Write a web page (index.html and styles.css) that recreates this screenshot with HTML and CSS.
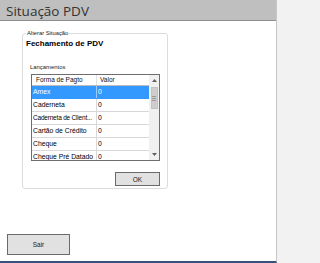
FILE: index.html
```html
<!DOCTYPE html>
<html lang="pt">
<head>
<meta charset="utf-8">
<title>Situação PDV</title>
<link rel="stylesheet" href="styles.css">
</head>
<body>
<div class="window">
  <div class="titlebar"><span class="title">Situação PDV</span></div>
  <div class="content">
    <div class="group">
      <span class="legend">Alterar Situação</span>
      <div class="heading">Fechamento de PDV</div>
      <div class="section-label">Lançamentos</div>
      <div class="grid">
        <div class="table">
          <div class="row head"><div class="cell c1">Forma de Pagto</div><div class="cell c2">Valor</div></div>
          <div class="row selected"><div class="cell c1">Amex</div><div class="cell c2">0</div></div>
          <div class="row"><div class="cell c1">Caderneta</div><div class="cell c2">0</div></div>
          <div class="row"><div class="cell c1 tight">Caderneta de Client...</div><div class="cell c2">0</div></div>
          <div class="row"><div class="cell c1">Cartão de Crédito</div><div class="cell c2">0</div></div>
          <div class="row"><div class="cell c1">Cheque</div><div class="cell c2">0</div></div>
          <div class="row"><div class="cell c1">Cheque Pré Datado</div><div class="cell c2">0</div></div>
        </div>
        <div class="scrollbar">
          <div class="arrow"><svg width="5" height="3" viewBox="0 0 5 3"><path d="M0 3 L2.5 0 L5 3 Z" fill="#606060"/></svg></div>
          <div class="track">
            <div class="thumb"><svg width="4" height="5" viewBox="0 0 4 5"><path d="M0 0.5 H4 M0 2.5 H4 M0 4.5 H4" stroke="#9a9a9a" stroke-width="1"/></svg></div>
          </div>
          <div class="arrow"><svg width="5" height="3" viewBox="0 0 5 3"><path d="M0 0 L2.5 3 L5 0 Z" fill="#606060"/></svg></div>
        </div>
      </div>
      <div class="actions"><button class="btn ok" type="button">OK</button></div>
    </div>
    <button class="btn sair" type="button">Sair</button>
  </div>
</div>
</body>
</html>
```
FILE: styles.css
```css
html, body {
  margin: 0;
  padding: 0;
  background: #f2f2f2;
}
body {
  width: 280px;
  height: 263px;
  overflow: hidden;
  font-family: "Liberation Sans", Arial, sans-serif;
}
.window {
  width: 276px;
  height: 261px;
  background: #ffffff;
  border-right: 1px solid #c6c6c6;
  border-bottom: 2px solid #34527a;
  display: flex;
  flex-direction: column;
}
.titlebar {
  height: 20px;
  background: #bfbfbf;
  border-bottom: 1px solid #8e8e8e;
  display: flex;
  align-items: center;
  padding-left: 6px;
  flex: none;
}
.title {
  font-family: "Open Sans", "Liberation Sans", sans-serif;
  font-size: 13.5px;
  color: #333333;
  line-height: 16px;
  margin-top: 2px;
}
.content {
  display: flex;
  flex-direction: column;
  align-items: flex-start;
  padding: 12px 0 0 7px;
}
.group {
  margin-left: 15px;
  width: 146px;
  height: 156px;
  box-sizing: border-box;
  border: 1px solid #dcdcdc;
  border-radius: 3px;
  display: flex;
  flex-direction: column;
  align-items: flex-start;
}
.legend {
  font-size: 5.8px;
  line-height: 7px;
  color: #222;
  background: #fff;
  margin: -4px 0 0 3px;
  padding: 0 1px;
}
.heading {
  font-weight: bold;
  font-size: 8px;
  line-height: 10px;
  color: #000;
  margin: 2px 0 0 3px;
}
.section-label {
  font-size: 5.9px;
  line-height: 8px;
  color: #222;
  margin: 14px 0 0 7px;
}
.grid {
  margin: 3px 0 0 8px;
  width: 129px;
  height: 87px;
  box-sizing: border-box;
  border: 1px solid #6e6e6e;
  display: flex;
  overflow: hidden;
}
.table {
  width: 117px;
  display: flex;
  flex-direction: column;
}
.row {
  display: flex;
  height: 13px;
  box-sizing: border-box;
  border-bottom: 1px solid #d8d8d8;
  flex: none;
}
.row.head {
  height: 11px;
  border-bottom: 1px solid #bcbcbc;
}
.cell {
  font-size: 6.8px;
  line-height: 12px;
  color: #000;
  white-space: nowrap;
  overflow: hidden;
  box-sizing: border-box;
  padding-left: 1px;
}
.cell.tight {
  letter-spacing: -0.2px;
  font-size: 6.5px;
}
.head .cell {
  line-height: 10px;
  font-size: 6.5px;
  color: #111;
}
.c1 {
  width: 65px;
  border-right: 1px solid #d8d8d8;
}
.c2 {
  flex: 1;
}
.head .c1 { padding-left: 4px; border-right-color: #e2e2e2; }
.head .c2 { padding-left: 3px; }
.row.selected {
  background: #3399ff;
  border-bottom-color: #3399ff;
}
.selected .cell {
  color: #ffffff;
}
.selected .c1 {
  border-right-color: #9ccbff;
}
.scrollbar {
  width: 10px;
  background: #f0f0f0;
  display: flex;
  flex-direction: column;
  flex: none;
}
.arrow {
  height: 11px;
  display: flex;
  align-items: center;
  justify-content: center;
  flex: none;
}
.track {
  flex: 1;
  display: flex;
  flex-direction: column;
  align-items: center;
  padding-top: 1px;
}
.thumb {
  width: 7px;
  height: 22px;
  background: #cdcdcd;
  border: 1px solid #c2c2c2;
  box-sizing: border-box;
  display: flex;
  align-items: center;
  justify-content: center;
}
.actions {
  margin: 11px 0 0 92px;
}
.btn {
  font-family: "Liberation Sans", Arial, sans-serif;
  font-size: 6.5px;
  color: #222;
  background: #e1e1e1;
  border: 1px solid #6a6a6a;
  padding: 0;
  margin: 0;
  display: flex;
  align-items: center;
  justify-content: center;
}
.ok {
  width: 45px;
  height: 14px;
}
.sair {
  width: 63px;
  height: 21px;
  margin-top: 45px;
}
```
